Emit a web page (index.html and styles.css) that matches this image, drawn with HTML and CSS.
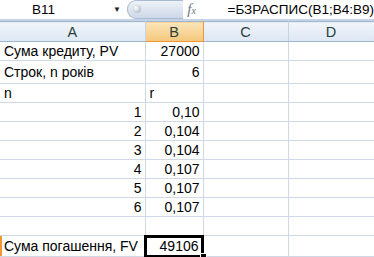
FILE: index.html
```html
<!DOCTYPE html>
<html lang="uk">
<head>
    <meta charset="UTF-8">
    <title>Сума погашення</title>
    <link rel="stylesheet" href="styles.css">
</head>
<body>
    <div class="formula-bar">
        <div class="name-box">B11</div>
        <div class="name-arrow">&#9660;</div>
        <div class="splitter"><span class="dot"></span></div>
        <div class="fx">f<sub>x</sub></div>
        <div class="formula">=БЗРАСПИС(B1;B4:B9)</div>
    </div>
    <div class="bar-gap"></div>

    <table class="sheet">
        <colgroup>
            <col class="col-a">
            <col class="col-b">
            <col class="col-c">
            <col class="col-d">
        </colgroup>
        <tr class="head">
            <th>A</th>
            <th class="active">B</th>
            <th>C</th>
            <th>D</th>
        </tr>
        <tr><td>Сума кредиту, PV</td><td class="num">27000</td><td></td><td></td></tr>
        <tr class="tall"><td>Строк, n років</td><td class="num">6</td><td></td><td></td></tr>
        <tr><td>n</td><td>r</td><td></td><td></td></tr>
        <tr><td class="num">1</td><td class="num">0,10</td><td></td><td></td></tr>
        <tr><td class="num">2</td><td class="num">0,104</td><td></td><td></td></tr>
        <tr><td class="num">3</td><td class="num">0,104</td><td></td><td></td></tr>
        <tr><td class="num">4</td><td class="num">0,107</td><td></td><td></td></tr>
        <tr><td class="num">5</td><td class="num">0,107</td><td></td><td></td></tr>
        <tr><td class="num">6</td><td class="num">0,107</td><td></td><td></td></tr>
        <tr><td></td><td></td><td></td><td></td></tr>
        <tr class="current">
            <td>Сума погашення, FV</td>
            <td class="num selected">49106<span class="handle"></span></td>
            <td></td><td></td>
        </tr>
    </table>
</body>
</html>
```

FILE: styles.css
```css
body {
    margin: 0;
    font-family: "Liberation Sans", Arial, sans-serif;
    font-size: 14px;
    color: #000;
    background: #fff;
    overflow: hidden;
}

/* formula bar */
.formula-bar {
    display: flex;
    align-items: center;
    height: 19px;
    background: #fff;
}
.name-box {
    width: 80px;
    padding-left: 32px;
    box-sizing: border-box;
    font-size: 13.5px;
}
.name-arrow {
    width: 12px;
    margin-left: 37px;
    font-size: 8px;
    color: #222;
}
.splitter {
    position: relative;
    width: 60px;
    height: 17px;
    margin-left: 3px;
    border-radius: 9px 0 0 9px;
    background: linear-gradient(#eef2f8, #cdd8e7);
    border: 1px solid #a9bbd3;
    border-right: none;
}
.splitter .dot {
    position: absolute;
    left: 5px;
    top: 4px;
    width: 8px;
    height: 8px;
    border-radius: 50%;
    background: radial-gradient(circle at 35% 35%, #fff, #b9c2cc 70%);
}
.fx {
    width: 22px;
    margin-left: 4px;
    font-family: "Liberation Serif", serif;
    font-style: italic;
    font-size: 15px;
    color: #6d7682;
}
.fx sub {
    font-size: 10px;
    vertical-align: 0;
}
.formula {
    padding-left: 20px;
    font-size: 13.5px;
}
.bar-gap {
    height: 2px;
    background: #c5d3e4;
}

/* grid */
.sheet {
    border-collapse: collapse;
    table-layout: fixed;
    width: 374px;
    border-top: 1px solid #9eb6ce;
}
.col-a { width: 145px; }
.col-b { width: 58px; }
.col-c { width: 85px; }
.col-d { width: 86px; }

.head th {
    height: 19px;
    padding: 0;
    font-weight: normal;
    font-size: 14.5px;
    color: #27413e;
    background: linear-gradient(#f1f5fb, #dde6f2);
    border-right: 1px solid #c5d3e4;
    border-bottom: 1px solid #9eb6ce;
}
.head th.active {
    background: linear-gradient(#fae4b9, #f5c77a);
    border-bottom-color: #f29536;
    border-right-color: #f29536;
}

.sheet td {
    height: 18px;
    padding: 0 3px 0 4px;
    border-right: 1px solid #d0d7e5;
    border-bottom: 1px solid #d0d7e5;
    white-space: nowrap;
    overflow: hidden;
    line-height: 18px;
}
.sheet .tall td {
    height: 20px;
    line-height: 22px;
}
.sheet .current td {
    height: 19px;
    line-height: 20px;
}
.sheet td.num {
    text-align: right;
}
.current td:first-child {
    box-shadow: inset 2px 0 0 #f29536;
}
.sheet td.selected {
    position: relative;
    overflow: visible;
    outline: 3px solid #000;
    outline-offset: -2px;
    padding-right: 4px;
}
.handle {
    position: absolute;
    right: -4px;
    bottom: -4px;
    width: 5px;
    height: 5px;
    background: #000;
    border: 1px solid #fff;
}
```
